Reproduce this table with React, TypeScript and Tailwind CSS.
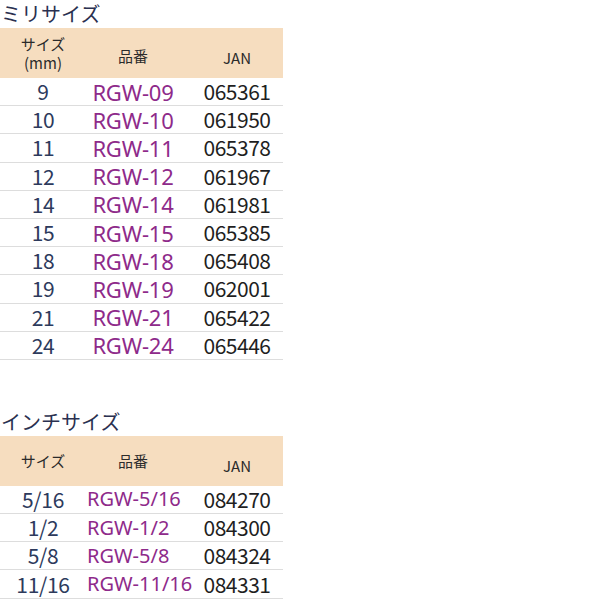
import React from 'react';

type Row = { size: string; code: string; jan: string };

const mm: Row[] = [
  { size: '9', code: 'RGW-09', jan: '065361' },
  { size: '10', code: 'RGW-10', jan: '061950' },
  { size: '11', code: 'RGW-11', jan: '065378' },
  { size: '12', code: 'RGW-12', jan: '061967' },
  { size: '14', code: 'RGW-14', jan: '061981' },
  { size: '15', code: 'RGW-15', jan: '065385' },
  { size: '18', code: 'RGW-18', jan: '065408' },
  { size: '19', code: 'RGW-19', jan: '062001' },
  { size: '21', code: 'RGW-21', jan: '065422' },
  { size: '24', code: 'RGW-24', jan: '065446' },
];

const inch: Row[] = [
  { size: '5/16', code: 'RGW-5/16', jan: '084270' },
  { size: '1/2', code: 'RGW-1/2', jan: '084300' },
  { size: '5/8', code: 'RGW-5/8', jan: '084324' },
  { size: '11/16', code: 'RGW-11/16', jan: '084331' },
];

const font = "font-['Noto_Sans_CJK_JP','Noto_Sans',sans-serif]";

interface SizeTableProps {
  title: string;
  sizeLabel: React.ReactNode;
  rows: Row[];
  tall?: boolean;
}

const SizeTable: React.FC<SizeTableProps> = ({ title, sizeLabel, rows, tall }) => {
  return (
    <div className="w-[283px]">
      <h2 className="text-[20px] leading-[28px] text-[#2a3050] pl-[1px]">{title}</h2>
      <div className="grid grid-cols-[88px_90px_105px] items-center h-[50px] bg-[#f6ddbf] text-[#2b2b2b] text-[15px]">
        <div className="text-center leading-[19px] pr-[2px]">{sizeLabel}</div>
        <div className={tall ? 'text-center pt-[6px]' : 'text-center'}>品番</div>
        <div className="text-center pl-[13px] pt-[10px]">JAN</div>
      </div>
      {rows.map((r) => (
        <div
          key={r.code}
          className="grid grid-cols-[88px_90px_105px] items-center h-[28.2px] border-b border-[#dddddd] text-[21px] leading-none"
        >
          <div className="text-center text-[#2d3a5c] pr-[2px] tracking-[-0.3px]">{r.size}</div>
          {tall ? (
            <div className="text-center text-[#8e2a8a] whitespace-nowrap font-['Noto_Sans',sans-serif] text-[22px] tracking-[-0.2px]">
              {r.code}
            </div>
          ) : (
            <div className="-ml-[1px] text-left text-[#8e2a8a] whitespace-nowrap font-['Noto_Sans',sans-serif] text-[20px]">
              {r.code}
            </div>
          )}
          <div className="text-center text-[#1f1f1f] pl-[13px] tracking-[-0.5px]">{r.jan}</div>
        </div>
      ))}
    </div>
  );
};

export default function App() {
  return (
    <div className={`${font} bg-white w-[600px] h-[600px] overflow-hidden`}>
      <SizeTable
        title="ミリサイズ"
        sizeLabel={
          <>
            サイズ
            <br />
            (mm)
          </>
        }
        rows={mm}
        tall
      />
      <div className="h-[48px]" />
      <SizeTable title="インチサイズ" sizeLabel="サイズ" rows={inch} />
    </div>
  );
}
